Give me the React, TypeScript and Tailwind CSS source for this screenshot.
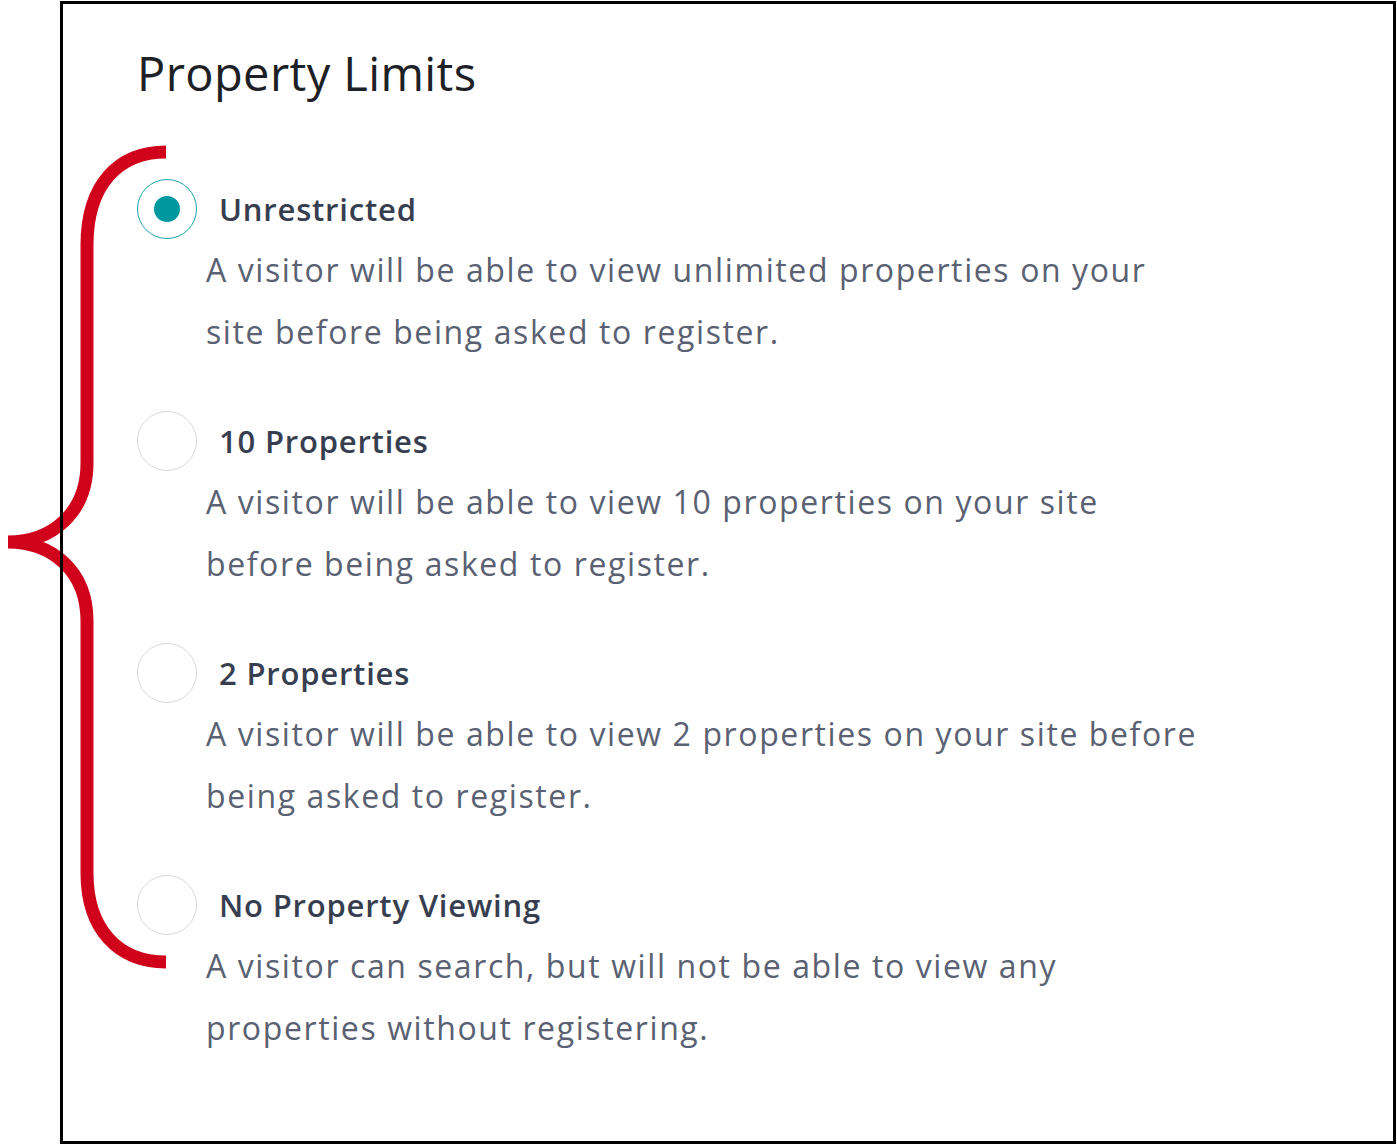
import React, { useState } from "react";

type Option = {
  id: string;
  label: string;
  lines: string[];
};

const options: Option[] = [
  {
    id: "unrestricted",
    label: "Unrestricted",
    lines: [
      "A visitor will be able to view unlimited properties on your",
      "site before being asked to register.",
    ],
  },
  {
    id: "ten",
    label: "10 Properties",
    lines: [
      "A visitor will be able to view 10 properties on your site",
      "before being asked to register.",
    ],
  },
  {
    id: "two",
    label: "2 Properties",
    lines: [
      "A visitor will be able to view 2 properties on your site before",
      "being asked to register.",
    ],
  },
  {
    id: "none",
    label: "No Property Viewing",
    lines: [
      "A visitor can search, but will not be able to view any",
      "properties without registering.",
    ],
  },
];

function Brace() {
  return (
    <svg
      className="absolute left-0 top-0 z-0"
      width="200"
      height="1000"
      viewBox="0 0 200 1000"
      fill="none"
    >
      <path
        d="M166 151 C118 151 87 184 87 244 L87 462 C87 512 52 541 8 541 M8 541 C52 541 87 570 87 620 L87 872 C87 928 118 961 166 961"
        stroke="#d0021b"
        strokeWidth="13"
        strokeLinecap="butt"
      />
    </svg>
  );
}

function Radio({ checked }: { checked: boolean }) {
  return (
    <span
      className={
        checked
          ? "flex h-[60px] w-[60px] shrink-0 items-center justify-center rounded-full border-[1.5px] border-[#1ba3ad]"
          : "flex h-[60px] w-[60px] shrink-0 items-center justify-center rounded-full border-[1.5px] border-[#d5d9de]"
      }
    >
      {checked && <span className="h-[26px] w-[26px] rounded-full bg-[#00989f]" />}
    </span>
  );
}

export default function App() {
  const [selected, setSelected] = useState("unrestricted");

  return (
    <div
      className="relative min-h-screen bg-white"
      style={{ fontFamily: "'Open Sans', 'Noto Sans', sans-serif", fontVariantLigatures: "none" }}
    >
      <Brace />
      <div className="relative z-10 ml-[60px] mt-[1px] h-[1143px] w-[1336px] border-[3px] border-black pl-[74px] pt-[41px]">
        <h1 className="text-[47px] font-medium leading-[56px] tracking-[0.4px] text-[#1d2125]">
          Property Limits
        </h1>
        <div className="mt-[78px] flex flex-col gap-[48px]">
          {options.map((opt) => (
            <div key={opt.id} className="cursor-pointer" onClick={() => setSelected(opt.id)}>
              <div className="flex h-[60px] items-center gap-[22px]">
                <Radio checked={selected === opt.id} />
                <span className="text-[31px] font-semibold tracking-[0.8px] text-[#363e50]">{opt.label}</span>
              </div>
              <p className="pl-[69px] text-[32px] leading-[62px] tracking-[1.6px] text-[#5a6172]">
                {opt.lines[0]}
                <br />
                {opt.lines[1]}
              </p>
            </div>
          ))}
        </div>
      </div>
    </div>
  );
}
